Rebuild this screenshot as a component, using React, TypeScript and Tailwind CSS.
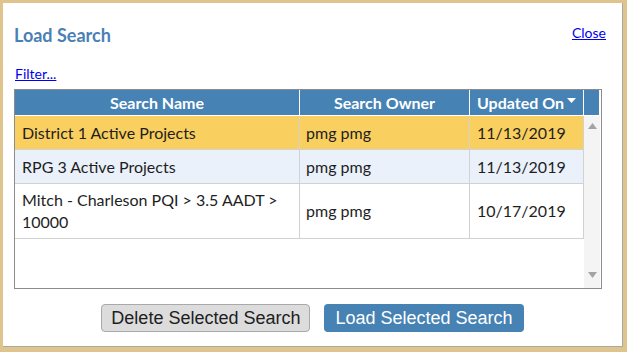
import { Fragment } from 'react'

type Search = { name: string; owner: string; updated: string }

const SEARCHES: Search[] = [
  { name: 'District 1 Active Projects', owner: 'pmg pmg', updated: '11/13/2019' },
  { name: 'RPG 3 Active Projects', owner: 'pmg pmg', updated: '11/13/2019' },
  { name: 'Mitch - Charleson PQI > 3.5 AADT > 10000', owner: 'pmg pmg', updated: '10/17/2019' },
]

const ROW_BG = ['bg-[#f9cf5f]', 'bg-[#eaf1fb]', 'bg-white']

export default function App() {
  return (
    <div className="w-[627px] h-[352px] bg-[#dfc48d] pl-[3px] pt-[3px] pr-[4px] pb-[5px] font-['Lato','Open_Sans',sans-serif]">
      <div className="h-full bg-white border-r border-b border-[#a8a8a8] flex flex-col">
        <div className="flex items-start justify-between pl-[11px] pr-[16px] pt-[20px]">
          <h2 className="text-[18px] leading-[24px] font-bold text-[#4a80b5]">Load Search</h2>
          <a href="#" className="text-[14px] leading-[18px] text-[#0000ee] underline mt-[1px]">Close</a>
        </div>

        <div className="pl-[12px] mt-[14px]">
          <a href="#" className="text-[14px] leading-[18px] text-[#0000ee] underline">Filter...</a>
        </div>

        <div className="ml-[11px] mr-[20px] mt-[4px] h-[200px] border border-[#8c8c8c] flex flex-col">
          <div className="flex h-[26px] border-b border-white pr-[2px]">
            <HeaderCell className="w-[285px]">Search Name</HeaderCell>
            <HeaderCell className="w-[170px]">Search Owner</HeaderCell>
            <HeaderCell className="w-[114px]">
              <span className="flex items-center gap-[3px]">
                Updated On
                <svg width="9" height="6" viewBox="0 0 9 6" className="mb-[4px]">
                  <path d="M0 0h9L4.5 5z" fill="white" />
                </svg>
              </span>
            </HeaderCell>
            <div className="flex-1 bg-[#4682b4]" />
          </div>

          <div className="flex flex-1 min-h-0">
            <div className="w-[569px]">
              {SEARCHES.map((s, i) => (
                <div key={i} className={`flex border-b border-[#d2d2d2] text-[16px] leading-[22px] text-[#1e1e1e] ${ROW_BG[i]}`}>
                  <Cell className="w-[285px] pl-[7px] pr-[6px]">{s.name}</Cell>
                  <Cell className="w-[170px] px-[6px]">{s.owner}</Cell>
                  <Cell className="w-[114px] px-[7px]">{s.updated}</Cell>
                </div>
              ))}
            </div>
            <div className="w-[16px] bg-[#f4f4f4] flex flex-col justify-between items-center pt-[7px] pb-[10px]">
              <svg width="9" height="6" viewBox="0 0 9 6">
                <path d="M4.5 0L9 6H0z" fill="#a3a3a3" />
              </svg>
              <svg width="9" height="6" viewBox="0 0 9 6">
                <path d="M0 0h9L4.5 6z" fill="#a3a3a3" />
              </svg>
            </div>
          </div>
        </div>

        <div className="flex justify-center gap-[14px] mt-[15px] font-['Liberation_Sans',Arial,sans-serif]">
          <button className="h-[28px] px-[9px] rounded-[4px] bg-[#dcdcdc] border border-[#a9a9a9] text-[18px] leading-[20px] text-[#1e1e1e]">
            Delete Selected Search
          </button>
          <button className="h-[28px] px-[11px] rounded-[4px] bg-[#4682b4] text-[18px] leading-[20px] text-white">
            Load Selected Search
          </button>
        </div>
      </div>
    </div>
  )
}

function HeaderCell({ className, children }: { className: string; children: React.ReactNode }) {
  return (
    <div className={`${className} bg-[#4682b4] border-r border-white flex items-center justify-center text-white font-bold text-[16px]`}>
      {children}
    </div>
  )
}

function Cell({ className, children }: { className: string; children: React.ReactNode }) {
  return (
    <div className={`${className} border-r border-[#d2d2d2] min-h-[33px] py-[5px] flex items-center`}>
      <Fragment>{children}</Fragment>
    </div>
  )
}
